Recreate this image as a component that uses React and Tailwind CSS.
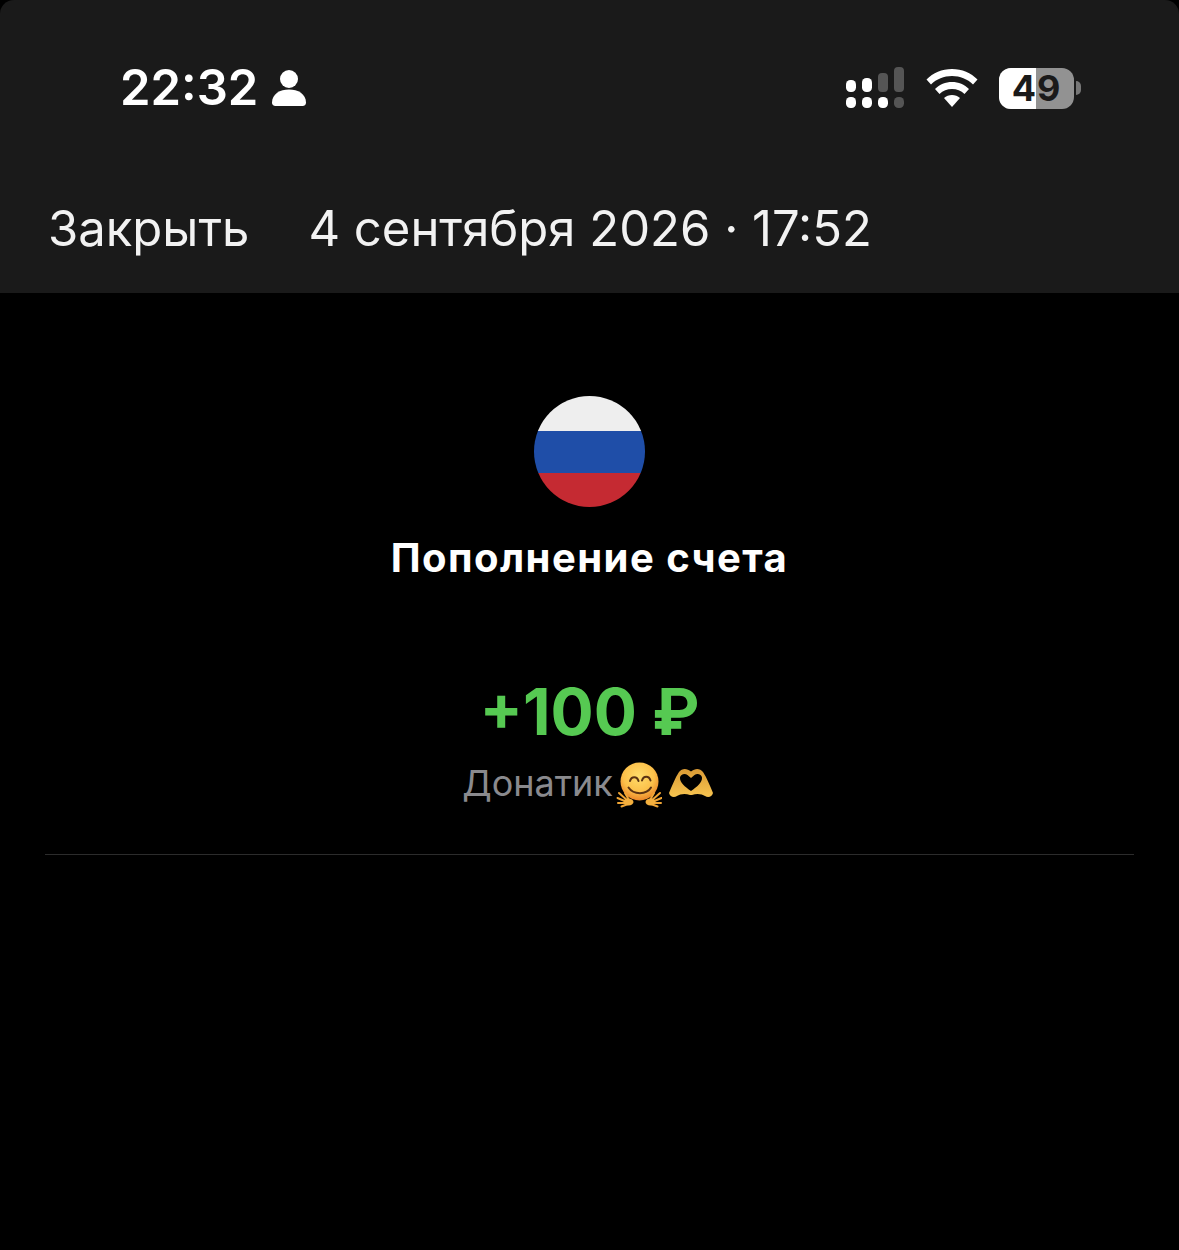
import React from "react";

const font = { fontFamily: "Inter, 'Noto Sans', sans-serif" };

function Person() {
  return (
    <svg width="36" height="38" viewBox="0 0 36 38" className="block">
      <circle cx="18" cy="10" r="9" fill="#fff" />
      <path d="M1 33.5C1 25 9 20.5 18 20.5S35 25 35 33.5C35 35.500 33.800 37 31.500 37H4.500C2.200 37 1 35.500 1 33.500Z" fill="#fff" />
    </svg>
  );
}

function Signal() {
  const w = "#ffffff";
  const g = "#555555";
  return (
    <svg width="60" height="42" viewBox="0 0 60 42" className="block">
      <rect x="1" y="13" width="10" height="12" rx="4.500" fill={w} />
      <rect x="17" y="11" width="10" height="14" rx="4.500" fill={w} />
      <rect x="33" y="6" width="10" height="19" rx="4" fill={g} />
      <rect x="49" y="0" width="10" height="25" rx="4" fill={g} />
      <rect x="1" y="30" width="10" height="11" rx="4.500" fill={w} />
      <rect x="17" y="30" width="10" height="11" rx="4.500" fill={w} />
      <rect x="33" y="30" width="10" height="11" rx="4.500" fill={w} />
      <rect x="49" y="30" width="10" height="11" rx="4.500" fill={g} />
    </svg>
  );
}

function Wifi() {
  return (
    <svg width="52" height="38" viewBox="0 0 52 38" className="block">
      <path d="M26 0C36 0 45 4 51.500 10.500L47 15.500C41.500 10 34 7 26 7S10.500 10 5 15.500L.5 10.500C7 4 16 0 26 0Z" fill="#fff" />
      <path d="M26 13C32.500 13 38.500 15.500 43 20L38.500 25C35 21.500 30.800 20 26 20S17 21.500 13.500 25L9 20C13.500 15.500 19.500 13 26 13Z" fill="#fff" />
      <path d="M26 26C29 26 31.800 27 34 29L26 38L18 29C20.200 27 23 26 26 26Z" fill="#fff" />
    </svg>
  );
}

function Battery() {
  return (
    <div className="flex items-center gap-[2px]">
      <div className="relative h-[41px] w-[75px] overflow-hidden rounded-[12px] bg-[#929292]">
        <div className="absolute inset-y-0 left-0 w-[37px] bg-white" />
        <span className="absolute inset-0 flex items-center justify-center text-[36px] font-bold leading-none tracking-[1px] text-[#1a1a1a]">49</span>
      </div>
      <div className="h-[14px] w-[5px] rounded-r-full bg-[#777777]" />
    </div>
  );
}

function HugFace() {
  return (
    <svg width="46" height="48" viewBox="3 0 46 48" className="block">
      <defs>
        <radialGradient id="hf" cx="48%" cy="36%" r="62%">
          <stop offset="0%" stopColor="#ffdc6a" />
          <stop offset="65%" stopColor="#fcc04a" />
          <stop offset="100%" stopColor="#ec8a2a" />
        </radialGradient>
      </defs>
      <circle cx="26.500" cy="21.500" r="19" fill="url(#hf)" />
      <path d="M17 21c1.500-5 7-5 8.500 0M29 20.500c1.500-5 7-5 8.500 0" fill="none" stroke="#5b3212" strokeWidth="2" strokeLinecap="round" />
      <path d="M15.500 27.500c5 7.500 18 7.500 22.500 0" fill="none" stroke="#5b3212" strokeWidth="2" strokeLinecap="round" />
      <g fill="none" stroke="#f0a535" strokeWidth="2" strokeLinecap="round">
        <path d="M15 41L6 33M14 42L4.500 38M14 43L5 43M15 44L8.500 46.500M16 40L12 33" />
        <path d="M38 41L47 33M39 42L48.500 38M39 43L48 43M38 44L44.500 46.500M37 40L41 33" />
      </g>
      <ellipse cx="15.500" cy="42" rx="5" ry="3.500" fill="#f4b03e" />
      <ellipse cx="37.500" cy="42" rx="5" ry="3.500" fill="#f4b03e" />
    </svg>
  );
}

function HeartHands() {
  return (
    <svg width="44" height="30" viewBox="0 0 44 30" className="block">
      <defs>
        <linearGradient id="hh" x1="0" y1="0" x2="0" y2="1">
          <stop offset="0%" stopColor="#d99a34" />
          <stop offset="100%" stopColor="#f7c450" />
        </linearGradient>
      </defs>
      <path
        fillRule="evenodd"
        d="M0 25C3 18 6 10 10 4C13 0 18 0 22 3.500C26 0 31 0 34 4C38 10 41 18 44 25C43 29 39 30 36 28C33 26 28 25 23 27L21 27C16 25 11 26 8 28C5 30 1 29 0 25ZM22 23C16 19 10.500 14 11 9.500C11.500 6 16 5 18.500 7L22 10L25.500 7C28 5 32.500 6 33 9.500C33.500 14 28 19 22 23Z"
        fill="url(#hh)"
      />
    </svg>
  );
}

export default function App() {
  return (
    <div className="flex min-h-[1250px] w-full flex-col bg-black text-white" style={font}>
      <header className="flex h-[293px] flex-col rounded-t-[14px] bg-[#1a1a1a]">
        <div className="flex items-center justify-between pl-[120px] pr-[98px] pt-[60px]">
          <div className="flex items-center gap-[13px]">
            <span className="text-[49px] font-semibold leading-[56px]">22:32</span>
            <Person />
          </div>
          <div className="flex items-center gap-[21px]">
            <Signal />
            <Wifi />
            <Battery />
          </div>
        </div>
        <div className="flex items-center pl-[48px] pt-[83px] text-[49px] leading-[60px] text-[#f2f2f2]">
          <span>Закрыть</span>
          <span className="ml-[59px]">4 сентября 2026 · 17:52</span>
        </div>
      </header>

      <main className="flex flex-col items-center pt-[103px]">
        <div className="flex h-[111px] w-[111px] flex-col overflow-hidden rounded-full">
          <div className="h-[35px] bg-[#eeeeee]" />
          <div className="h-[42px] bg-[#1f4ea8]" />
          <div className="flex-1 bg-[#c52a32]" />
        </div>
        <h1 className="mt-[27px] text-[40px] font-bold leading-[48px] tracking-[1.45px]">Пополнение счета</h1>
        <div className="mt-[92px] text-[64px] font-bold leading-[76px] text-[#56c952]">+100 ₽</div>
        <div className="mt-[8px] flex h-[50px] items-center pr-[4px] text-[36px] text-[#8a8a8e]">
          <span>Донатик</span>
          <span className="ml-[3px] mt-[1px]"><HugFace /></span>
          <span className="ml-[7px]"><HeartHands /></span>
        </div>
      </main>

      <div className="mx-[45px] mt-[46px] h-px bg-[#2c2c2c]" />
    </div>
  );
}
